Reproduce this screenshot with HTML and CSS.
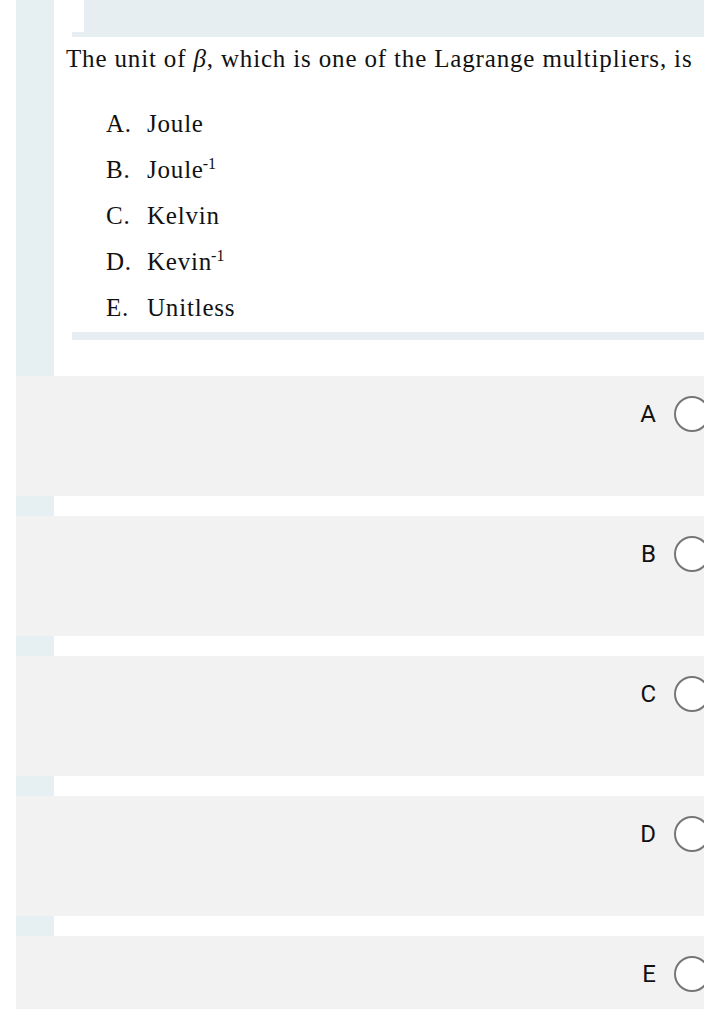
FILE: index.html
```html
<!DOCTYPE html>
<html>
<head>
<meta charset="utf-8">
<link rel="stylesheet" href="styles.css">
</head>
<body>
<div class="page">
  <div class="question">
    <div class="bar"></div>
    <div class="q-body">
      <div class="q-band"></div>
      <div class="q-strip"></div>
      <p class="q-text">The unit of <i>β</i>, which is one of the Lagrange multipliers, is</p>
      <ol class="opts">
        <li><span class="lbl">A.</span><span>Joule</span></li>
        <li><span class="lbl">B.</span><span>Joule<sup>-1</sup></span></li>
        <li><span class="lbl">C.</span><span>Kelvin</span></li>
        <li><span class="lbl">D.</span><span>Kevin<sup>-1</sup></span></li>
        <li><span class="lbl">E.</span><span>Unitless</span></li>
      </ol>
      <div class="q-strip q-strip-bottom"></div>
    </div>
  </div>
  <div class="answer"><span class="a-label">A</span><span class="radio"></span></div>
  <div class="sep"><div class="bar"></div></div>
  <div class="answer"><span class="a-label">B</span><span class="radio"></span></div>
  <div class="sep"><div class="bar"></div></div>
  <div class="answer"><span class="a-label">C</span><span class="radio"></span></div>
  <div class="sep"><div class="bar"></div></div>
  <div class="answer"><span class="a-label">D</span><span class="radio"></span></div>
  <div class="sep"><div class="bar"></div></div>
  <div class="answer"><span class="a-label">E</span><span class="radio"></span></div>
</div>
</body>
</html>
```
FILE: styles.css
```css
html, body {
  margin: 0;
  padding: 0;
  background: #ffffff;
}
.page {
  padding: 0 16px;
  overflow: hidden;
  height: 1009px;
}
.question {
  display: flex;
  height: 376px;
}
.bar {
  width: 38px;
  flex: 0 0 38px;
  background: #e6eff2;
}
.q-body {
  flex: 1;
  padding-left: 12px;
  font-family: "Liberation Serif", "Times New Roman", serif;
  color: #111;
}
.q-band {
  height: 32px;
  margin-left: 18px;
  background: #e6eef1;
}
.q-strip {
  height: 5px;
  margin-left: 6px;
  background: #e6eef1;
}
.q-strip-bottom {
  height: 8px;
  margin-top: 1px;
}
.q-text {
  margin: 7px 0 0 0;
  font-size: 25px;
  line-height: 30px;
  white-space: nowrap;
  letter-spacing: 0.84px;
}
.q-text i {
  font-style: italic;
}
.opts {
  list-style: none;
  margin: 27px 0 0 0;
  padding: 0 0 0 40px;
  font-size: 25px;
  line-height: 46px;
  letter-spacing: 0.8px;
}
.opts li {
  display: flex;
  height: 46px;
}
.lbl {
  width: 41px;
}
.opts sup {
  font-size: 16px;
  line-height: 0;
  vertical-align: 9px;
  letter-spacing: 0;
  margin-left: -1px;
}
.answer {
  height: 120px;
  background: #f2f2f2;
  display: flex;
  justify-content: flex-end;
  align-items: flex-start;
  padding-top: 20px;
  box-sizing: border-box;
  overflow: hidden;
}
.a-label {
  font-family: Roboto, "Liberation Sans", sans-serif;
  font-size: 24px;
  line-height: 36px;
  color: #111;
  margin-right: 18px;
}
.radio {
  width: 36px;
  height: 36px;
  box-sizing: border-box;
  border: 2px solid #767676;
  border-radius: 50%;
  background: #ffffff;
  margin-right: -6px;
  flex: 0 0 36px;
}
.sep {
  height: 20px;
  display: flex;
}
```
